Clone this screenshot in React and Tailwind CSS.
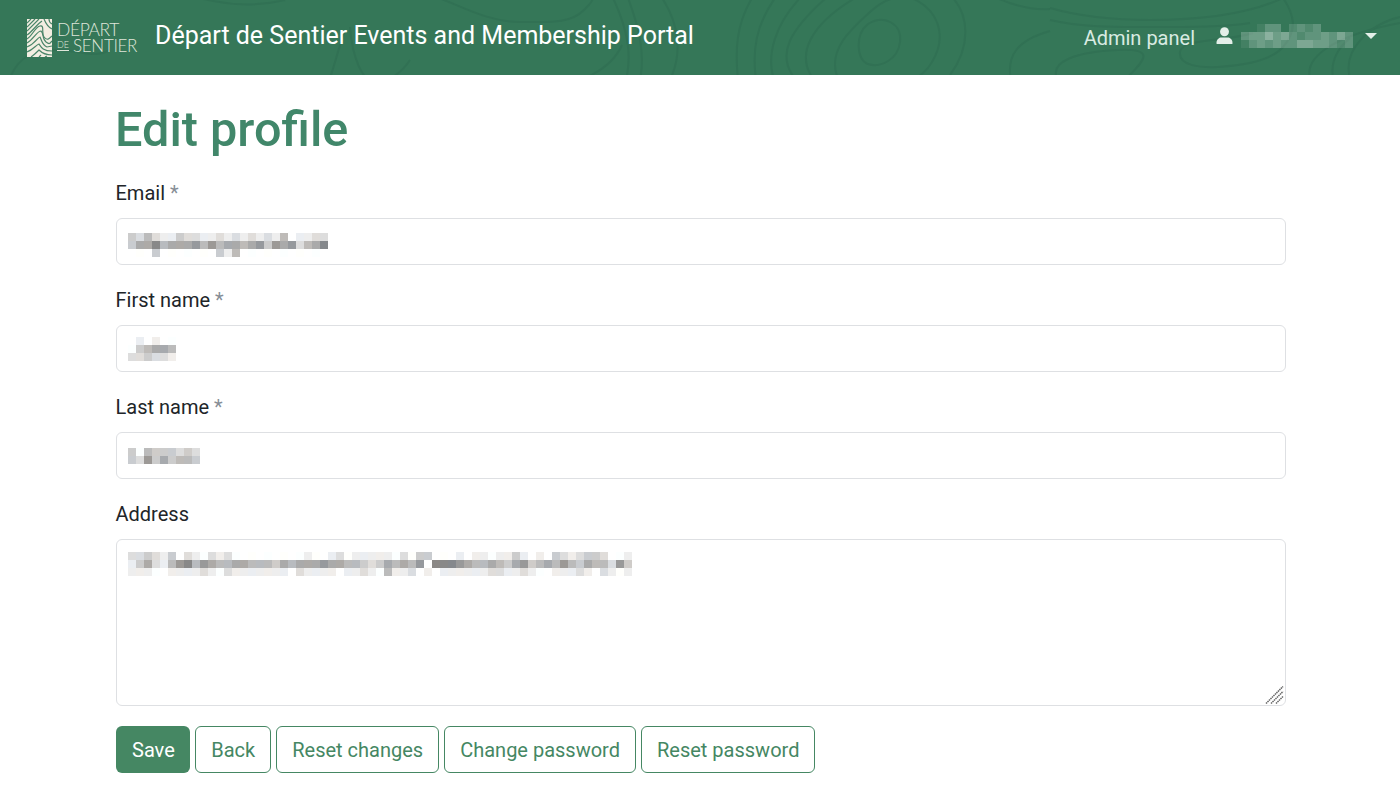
const FONT = "font-['Roboto',sans-serif]";

function Pixels({ rows, size = 8, white = false }) {
  return (
    <div className="flex flex-col">
      {rows.map((row, r) => (
        <div key={r} className="flex">
          {row.split("").map((c, i) => {
            const v = parseInt(c, 16);
            const g = v * 17;
            const tint = (i * 7 + r * 3) % 4;
            const bg = white
              ? `rgba(255,255,255,${v / 14})`
              : `rgb(${g + (tint === 1 ? 3 : tint === 3 ? -3 : 0)},${g},${g + (tint === 3 ? 4 : tint === 1 ? -3 : 0)})`;
            return <span key={i} style={{ width: size, height: size, background: bg }} />;
          })}
        </div>
      ))}
    </div>
  );
}

const contours = [
  "M10 78C18 58 33 48 60 50S95 58 110 50",
  "M200 -2C230 6 260 6 285 0",
  "M330 78C336 60 338 50 345 30",
  "M350 27C352 55 362 85 378 82C392 80 402 72 410 60",
  "M439 -2C465 8 490 22 520 22S570 24 584 10S590 0 590 -2",
  "M484 76C478 84 472 92 470 100",
  "M528 100C534 88 545 84 560 84S610 72 622 45",
  "M613 -2C628 30 632 55 626 80",
  "M628 -2C640 30 645 55 640 80",
  "M662 -2C680 25 682 55 670 80",
  "M738 80C735 50 736 25 752 -2",
  "M756 80C752 50 756 25 775 -2",
  "M774 80C766 55 775 25 800 -2",
  "M796 80C775 55 790 30 826 -2",
  "M814 80C795 55 810 25 855 -2",
  "M868 24C885 14 902 24 900 42S880 68 868 64S855 34 868 24Z",
  "M837 76C828 50 850 30 870 12S900 -2 912 -2M912 -2C938 10 948 35 932 62S890 82 877 82S845 86 837 76",
  "M953 -2C968 15 972 45 950 75",
  "M1011 80C1006 55 1018 40 1050 31",
  "M997 -2C1015 6 1035 10 1050 9",
  "M1050 8C1085 18 1120 20 1150 20S1240 18 1283 -2",
  "M1050 20C1085 28 1120 27 1150 27S1220 28 1250 23",
  "M1283 -2C1294 14 1298 30 1283 47S1232 66 1217 67S1178 66 1180 52S1225 42 1253 33",
  "M1057 78C1050 62 1075 52 1117 50S1142 62 1127 78",
  "M1310 78C1304 55 1340 34 1400 23",
  "M1350 78C1342 50 1370 24 1400 17",
  "M1333 78C1330 60 1338 48 1350 38",
];

function HeaderBg() {
  return (
    <svg className="absolute inset-0 w-full h-full" viewBox="0 0 1400 75" preserveAspectRatio="none" fill="none" aria-hidden="true">
      {contours.map((d, i) => (
        <path key={i} d={d} stroke="#317154" strokeWidth="2" />
      ))}
    </svg>
  );
}

function LogoMark() {
  return (
    <svg width="25" height="38" viewBox="0 0 25 38" className="shrink-0" aria-hidden="true">
      <rect width="25" height="38" fill="#f3eee2" />
      <g fill="none" stroke="#4a8569" strokeWidth="1.200">
        <path d="M0 4L4 0M0 8L8 0M0 12L12 0M0 16C6 12 9 6 15 2" />
        <path d="M0 20C6 16 8 8 13 7C18 6 14 14 17 18S22 20 25 17" />
        <path d="M0 24C7 20 10 12 14 12C17 14 15 20 19 23S23 24 25 22" />
        <path d="M0 28C8 25 11 18 13 18C15 22 15 26 20 28L25 27" />
        <path d="M0 33C6 31 9 26 12 25C14 28 16 32 25 32" />
        <path d="M4 38C7 36 10 33 12 31C15 34 19 36 25 36" />
        <path d="M17 0C19 5 21 8 25 10M22 0C22 3 23 4 25 5M12 38L14 36M18 38L20 37" />
      </g>
    </svg>
  );
}

function Label({ text, required }) {
  return (
    <label className="block text-[20px] leading-[30px] -ml-[0.5px] mb-[10px] text-[#212529]">
      {text}
      {required && <span className="text-[#868e96]"> *</span>}
    </label>
  );
}

function Field({ label, required, rows, inner }) {
  return (
    <div className="mb-[20px]">
      <Label text={label} required={required} />
      <div className={`h-[47px] border border-[#dee0e3] rounded-[6px] pl-[11px] flex items-center bg-white ${inner}`}>
        <Pixels rows={rows} />
      </div>
    </div>
  );
}

const Outline = ({ children }) => (
  <button className="h-[47px] pl-[15.5px] pr-[14.5px] border border-[#458763] rounded-[6px] text-[20px] text-[#458763] bg-white">
    {children}
  </button>
);

export default function App() {
  return (
    <div className={`${FONT} min-h-[798px] bg-white`}>
      <header className="relative h-[75px] bg-[#357758] overflow-hidden flex items-center pl-[27px] pr-[23px]">
        <HeaderBg />
        <div className="relative flex items-center">
          <LogoMark />
          <div className="ml-[5px] w-[81px] text-[#dfe6da] font-['Lato',sans-serif] font-light leading-none">
            <div className="text-[17.5px] h-[16px] tracking-[-0.4px]">DÉPART</div>
            <div className="flex items-center">
              <span className="text-[9px] leading-[10px] border-b border-[#dfe6da] mr-[4px] w-[12px]">DE</span>
              <span className="text-[17px] tracking-[-0.3px]">SENTIER</span>
            </div>
          </div>
        </div>
        <div className="relative ml-[17px] -mt-[3px] text-[25px] leading-[36px] text-white whitespace-nowrap">
          Départ de Sentier Events and Membership Portal
        </div>
        <div className="relative ml-auto flex items-center text-[20px] text-[#d9ebe2]">
          <span>Admin panel</span>
          <svg className="ml-[21px] -mt-[3px]" width="17" height="18" viewBox="0 0 16 17" fill="#e4efe9" aria-hidden="true">
            <circle cx="8" cy="4.500" r="4.200" />
            <path d="M0.500 16v-1.500C0.500 12 3 10 5 10h6c2 0 4.500 2 4.500 4.500V16z" />
          </svg>
          <div className="ml-[8px] -mt-[3px]">
            <Pixels white rows={["001330232300000", "344645323343530", "134343355443230"]} />
          </div>
          <div className="ml-[4px] -mt-[3px] w-0 h-0 border-x-[6px] border-x-transparent border-t-[6px] border-t-[#e4efe9]" />
        </div>
      </header>
      <main className="w-[1170px] ml-[116px]">
        <h1 className="text-[48.6px] leading-[58px] font-medium text-[#41876a] -ml-[1px] mt-[26px] mb-[19px]">Edit profile</h1>
        <form>
          <Field
            label="Email"
            required
            inner="pt-[6px]"
            rows={[
              "cdbdeecddeededededebfeedd",
              "caa8baaa9b9baaba9c9a9dba8",
              "fffcfffffffcebfffffffffff",
            ]}
          />
          <Field label="First name" required inner="pt-[1px]" rows={["fefeff", "fcbaab", "ddcdde"]} />
          <Field label="Last name" required inner="" rows={["cfbcccdcd", "cd9cacbbc"]} />
          <div className="mb-[20px]">
            <Label text="Address" />
            <div className="relative h-[167px]">
              <textarea className="block w-full h-[167px] border border-[#dee0e3] rounded-[6px] resize-none outline-none bg-white" />
              <div className="absolute left-[12px] top-[13px]">
                <Pixels
                  rows={[
                    "ddcdecfdefdedfffffffffeffedfeeeeefdfccfffefeefeecefefcdedccdffec".slice(0, 63),
                    "ecadeb98b9abbaabbbcabaaa9aabbcdcabab9f8889abbabca9cbab9bcabbd9cb".slice(0, 63),
                    "eeeffeeeedefdeeeeeeefdeeeefeedefbeedfefeeeeeeddeedeffeeedefdefeefdfe".slice(0, 63),
                  ]}
                />
              </div>
              <svg className="absolute right-[1px] bottom-[1px]" width="20" height="20" viewBox="0 0 20 20" fill="none" stroke="#666" strokeWidth="1.500" strokeDasharray="1.500 0.600" aria-hidden="true">
                <path d="M1 18.500L18 1.500M6 18.500L18 6.500M11 18.500L18 11.500" />
              </svg>
            </div>
          </div>
          <div className="flex gap-[5px]">
            <button className="h-[47px] pl-[16px] pr-[15px] rounded-[6px] text-[20px] text-white bg-[#458763]">Save</button>
            <Outline>Back</Outline>
            <Outline>Reset changes</Outline>
            <Outline>Change password</Outline>
            <Outline>Reset password</Outline>
          </div>
        </form>
      </main>
    </div>
  );
}
